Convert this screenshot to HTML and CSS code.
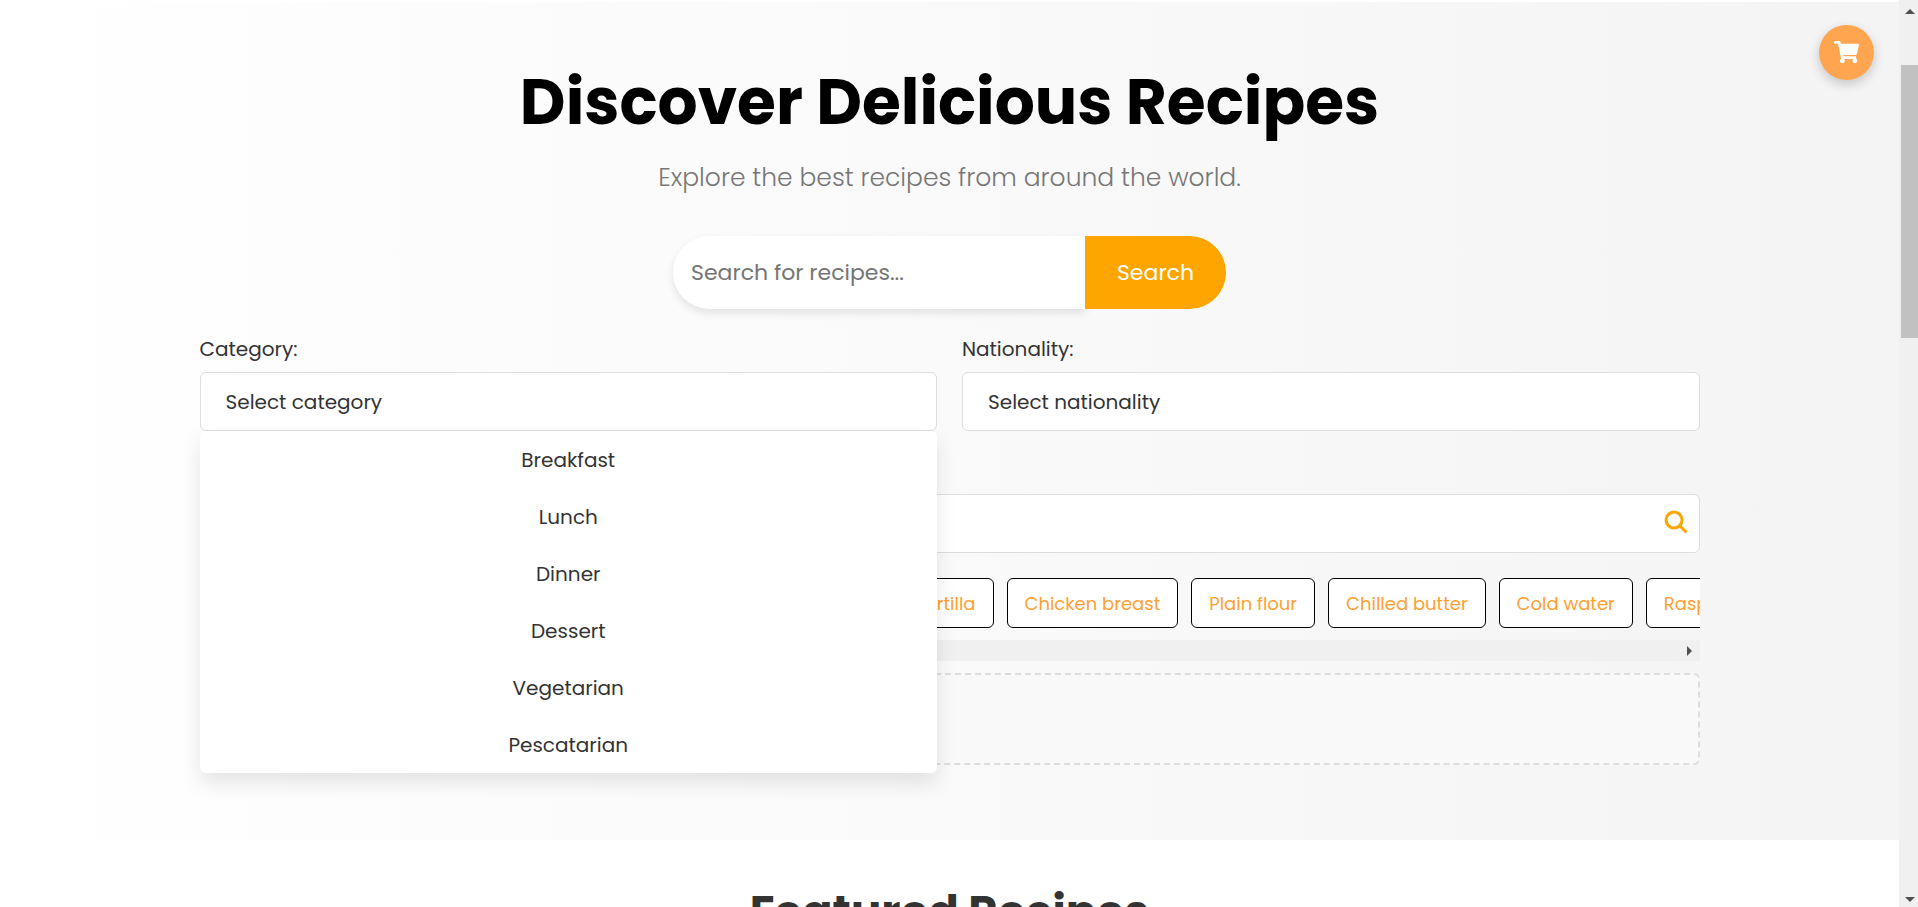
FILE: index.html
```html
<!DOCTYPE html>
<html lang="en">
<head>
    <meta charset="UTF-8">
    <meta name="viewport" content="width=device-width, initial-scale=1.0">
    <title>Discover Delicious Recipes</title>
    <link rel="stylesheet" href="styles.css">
</head>
<body>
    <div class="content">
        <!-- Hero -->
        <section class="hero">
            <div class="container">
                <h1>Discover Delicious Recipes</h1>
                <p class="subtitle">Explore the best recipes from around the world.</p>

                <form class="search-bar">
                    <input type="text" placeholder="Search for recipes..." aria-label="Search for recipes">
                    <button type="submit">Search</button>
                </form>

                <!-- Filters -->
                <div class="filters">
                    <div class="filter">
                        <label for="category">Category:</label>
                        <div class="dropdown">
                            <select id="category">
                                <option>Select category</option>
                            </select>
                            <ul class="dropdown-menu">
                                <li><button type="button">Breakfast</button></li>
                                <li><button type="button">Lunch</button></li>
                                <li><button type="button">Dinner</button></li>
                                <li><button type="button">Dessert</button></li>
                                <li><button type="button">Vegetarian</button></li>
                                <li><button type="button">Pescatarian</button></li>
                            </ul>
                        </div>
                    </div>
                    <div class="filter">
                        <label for="nationality">Nationality:</label>
                        <select id="nationality">
                            <option>Select nationality</option>
                        </select>
                    </div>
                </div>

                <!-- Ingredients -->
                <div class="ingredients">
                    <label for="ingredient">Ingredients:</label>
                    <div class="ingredient-search">
                        <input type="text" id="ingredient">
                        <svg class="search-icon" viewBox="0 0 24 24" aria-hidden="true">
                            <circle cx="10" cy="10" r="8"/>
                            <path d="M16 16l6.5 6.5"/>
                        </svg>
                    </div>
                    <div class="tags">
                        <button type="button">Olive oil</button>
                        <button type="button">Onions</button>
                        <button type="button">Garlic cloves</button>
                        <button type="button">Black pepper</button>
                        <button type="button">Eggs</button>
                        <button type="button">Flour tortilla</button>
                        <button type="button">Chicken breast</button>
                        <button type="button">Plain flour</button>
                        <button type="button">Chilled butter</button>
                        <button type="button">Cold water</button>
                        <button type="button">Raspberry jam</button>
                    </div>
                    <div class="scroll-x"><span class="arrow-right"></span></div>
                    <div class="drop-area"></div>
                </div>
            </div>
        </section>

        <!-- Featured -->
        <section class="featured">
            <h2>Featured Recipes</h2>
        </section>
    </div>

    <div class="scroll-y">
        <span class="arrow-up"></span>
        <span class="thumb"></span>
        <span class="arrow-down"></span>
    </div>

    <button class="cart-btn" aria-label="Cart">
        <svg viewBox="0 0 576 512" aria-hidden="true">
            <path d="M528.12 301.319l47.273-208C578.806 78.301 567.391 64 551.99 64H159.208l-9.166-44.81C147.758 8.021 137.93 0 126.529 0H24C10.745 0 0 10.745 0 24v16c0 13.255 10.745 24 24 24h69.883l70.248 343.435C147.325 417.1 136 435.222 136 456c0 30.928 25.072 56 56 56s56-25.072 56-56c0-15.674-6.447-29.835-16.824-40h209.647C430.447 426.165 424 440.326 424 456c0 30.928 25.072 56 56 56s56-25.072 56-56c0-22.172-12.888-41.332-31.579-50.405l5.517-24.276c3.413-15.018-8.002-29.319-23.403-29.319H218.117l-6.545-32h293.145c11.206 0 20.92-7.754 23.403-18.681z"/>
        </svg>
    </button>
</body>
</html>
```
FILE: styles.css
```css
* {
    box-sizing: border-box;
}

body {
    font-family: 'Poppins', 'Inter', sans-serif;
    margin: 0;
    color: #333;
    background-color: #fff;
    display: flex;
    height: 100vh;
    overflow: hidden;
}

input,
select,
button {
    font-family: inherit;
    color: inherit;
}

button {
    cursor: pointer;
}

.content {
    flex: 1;
    min-width: 0;
    padding-top: 2px;
}

/* Hero */
.hero {
    background: linear-gradient(to right, #fff, #f4f4f4);
    padding: 61px 20px 75px;
}

.container {
    max-width: 1500px;
    margin: 0 auto;
}

h1 {
    font-size: 63px;
    line-height: 78px;
    font-weight: 700;
    text-align: center;
    color: #000;
    margin: 0;
}

.subtitle {
    font-size: 25px;
    line-height: 38px;
    font-weight: 300;
    text-align: center;
    color: #777;
    margin: 18px 0 39px;
}

.search-bar {
    display: flex;
    justify-content: center;
    height: 73px;
}

.search-bar input {
    width: 412px;
    padding: 0 18px;
    border: none;
    border-radius: 37px 0 0 37px;
    background-color: #fff;
    font-size: 22px;
    box-shadow: 0 4px 8px rgba(0, 0, 0, 0.1);
}

.search-bar input::placeholder {
    color: #757575;
}

.search-bar button {
    width: 141px;
    border: none;
    border-radius: 0 37px 37px 0;
    background-color: orange;
    color: #fff;
    font-size: 22px;
    position: relative;
}

/* Filters */
.filters {
    display: flex;
    gap: 25px;
    margin-top: 25px;
}

.filter {
    flex: 1;
}

label {
    display: block;
    font-size: 20px;
    line-height: 30px;
    margin-bottom: 8px;
}

.dropdown {
    position: relative;
}

select,
.ingredient-search input {
    appearance: none;
    display: block;
    width: 100%;
    height: 59px;
    padding: 0 25px;
    border: 1px solid #ddd;
    border-radius: 6px;
    background-color: #fff;
    font-size: 20px;
}

.dropdown-menu {
    position: absolute;
    top: 100%;
    left: 0;
    right: 0;
    z-index: 2;
    margin: 0;
    padding: 0;
    list-style: none;
    background-color: #fff;
    border-radius: 6px;
    box-shadow: 0 10px 20px rgba(0, 0, 0, 0.1);
}

.dropdown-menu button {
    display: block;
    width: 100%;
    height: 57px;
    border: none;
    background: none;
    font-size: 20px;
}

/* Ingredients */
.ingredients {
    margin-top: 25px;
}

.ingredient-search {
    position: relative;
}

.search-icon {
    position: absolute;
    top: 16px;
    right: 12px;
    width: 24px;
    fill: none;
    stroke: orange;
    stroke-width: 3;
}

.tags {
    display: flex;
    gap: 13px;
    margin-top: 25px;
    overflow: hidden;
}

.tags button {
    flex-shrink: 0;
    height: 50px;
    padding: 0 17px;
    border: 1px solid #000;
    border-radius: 6px;
    background-color: #fff;
    color: #ffa030;
    font-size: 18px;
}

.scroll-x {
    display: flex;
    align-items: center;
    justify-content: flex-end;
    height: 21px;
    margin: 12px 0;
    padding-right: 8px;
    background-color: #f0f0f0;
}

.arrow-right {
    border: 5px solid transparent;
    border-left-color: #505050;
    border-right: none;
}

.drop-area {
    height: 92px;
    border: 2px dashed #ddd;
    border-radius: 6px;
    background-color: #f9f9f9;
}

/* Featured */
.featured {
    padding: 43px 20px;
    text-align: center;
}

.featured h2 {
    margin: 0;
    font-size: 45px;
    line-height: 60px;
    font-weight: 700;
}

/* Page scrollbar */
.scroll-y {
    display: flex;
    flex-direction: column;
    align-items: center;
    width: 19px;
    padding: 9px 0 5px 2px;
    background-color: #f0f0f0;
}

.arrow-up,
.arrow-down {
    border: 5px solid transparent;
}

.arrow-up {
    border-bottom-color: #505050;
    border-top: none;
}

.arrow-down {
    border-top-color: #505050;
    border-bottom: none;
    margin-top: auto;
}

.thumb {
    width: 100%;
    height: 273px;
    margin-top: 51px;
    background-color: #c1c1c1;
}

/* Cart */
.cart-btn {
    position: fixed;
    top: 25px;
    right: 44px;
    width: 55px;
    height: 55px;
    padding: 0;
    border: none;
    border-radius: 50%;
    background-color: #ffa54f;
    box-shadow: 0 4px 12px rgba(0, 0, 0, 0.2);
}

.cart-btn svg {
    display: block;
    width: 25px;
    margin: 0 auto;
    fill: #fff;
}
```
